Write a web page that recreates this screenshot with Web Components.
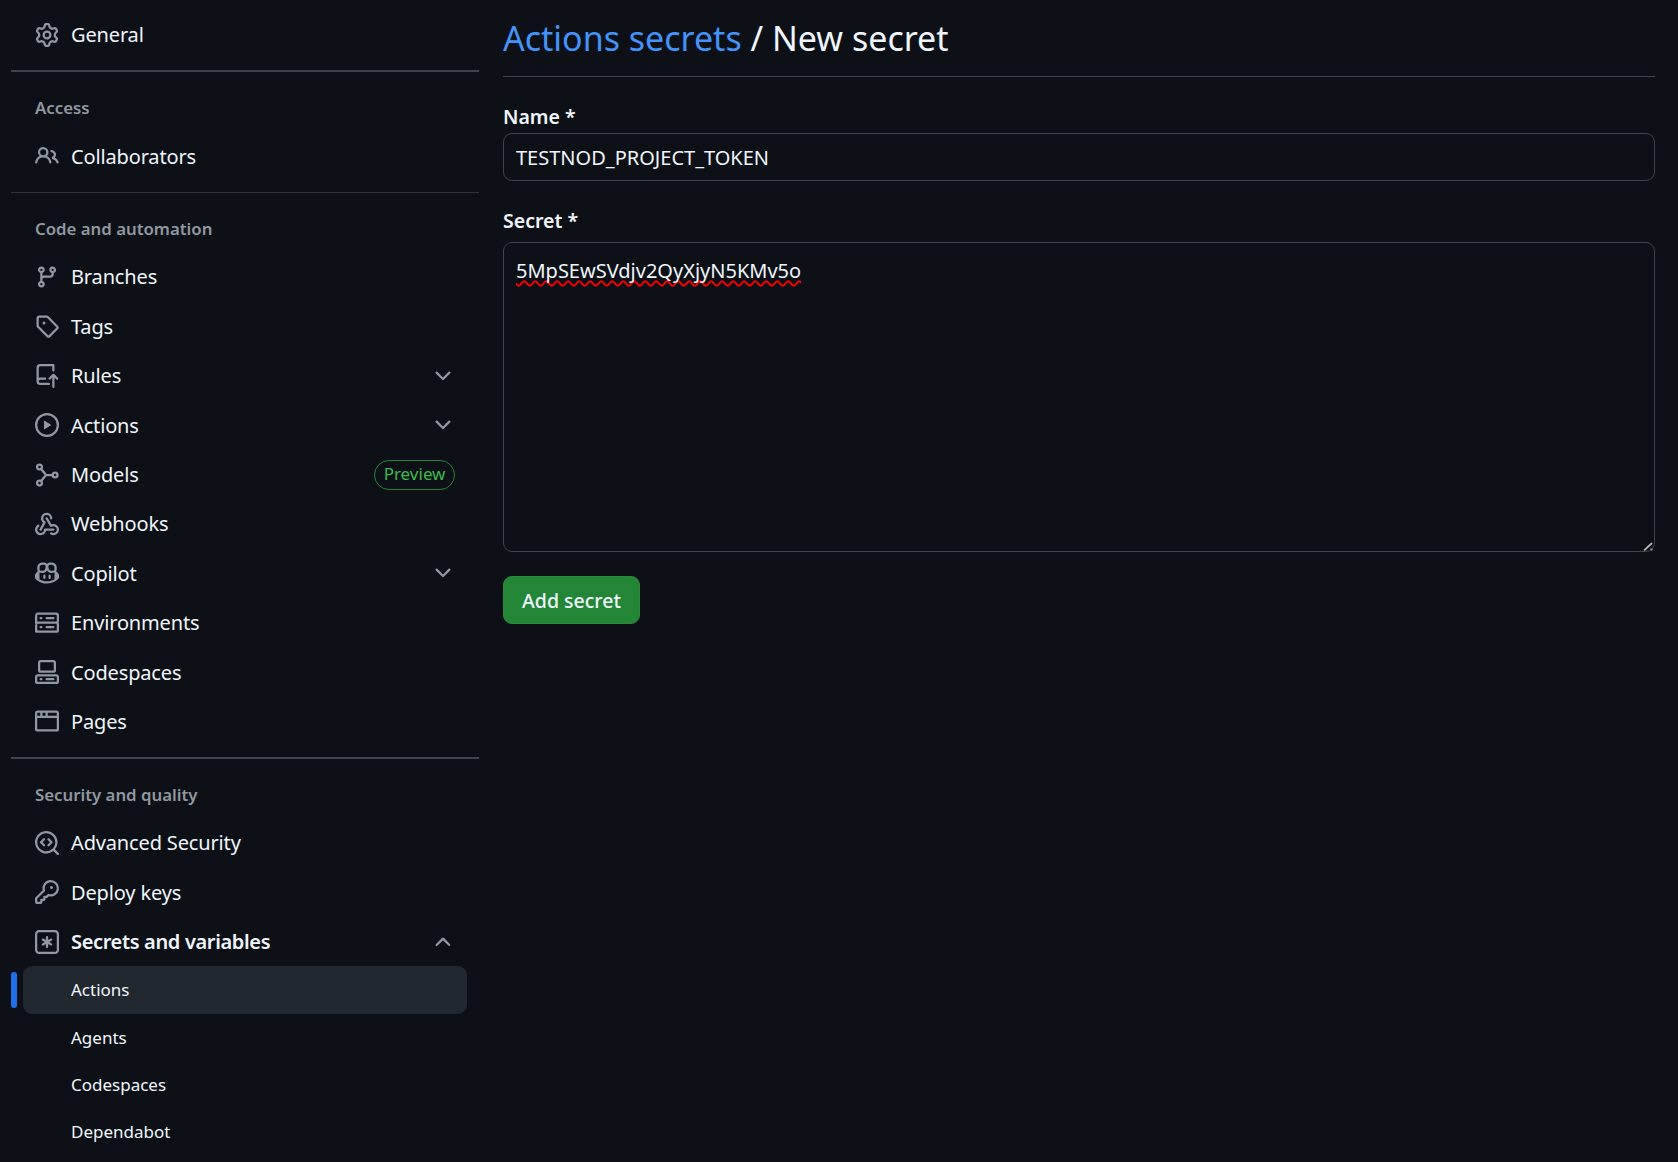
<!DOCTYPE html>
<html lang="en">
<head>
<meta charset="utf-8">
<title>Actions secrets / New secret</title>
<style>
  html, body { margin: 0; height: 100%; background: #0d1117; }
  body {
    color: #f0f6fc;
    display: flex;
    font-family: "Noto Sans", "Open Sans", sans-serif;
    gap: 24px;
    height: 1162px;
    overflow: hidden;
    padding: 0 23px 0 11px;
    box-sizing: border-box;
  }
</style>
</head>
<body>
<settings-nav>
  <nav-item icon="gear">General</nav-item>
  <nav-divider thick></nav-divider>
  <nav-heading>Access</nav-heading>
  <nav-item icon="people">Collaborators</nav-item>
  <nav-divider></nav-divider>
  <nav-heading>Code and automation</nav-heading>
  <nav-item icon="branch">Branches</nav-item>
  <nav-item icon="tag">Tags</nav-item>
  <nav-item icon="rules" chevron="down">Rules</nav-item>
  <nav-item icon="play" chevron="down">Actions</nav-item>
  <nav-item icon="model" badge="Preview">Models</nav-item>
  <nav-item icon="webhook">Webhooks</nav-item>
  <nav-item icon="copilot" chevron="down">Copilot</nav-item>
  <nav-item icon="server">Environments</nav-item>
  <nav-item icon="codespaces">Codespaces</nav-item>
  <nav-item icon="browser">Pages</nav-item>
  <nav-divider thick></nav-divider>
  <nav-heading>Security and quality</nav-heading>
  <nav-item icon="codescan">Advanced Security</nav-item>
  <nav-item icon="key">Deploy keys</nav-item>
  <nav-item icon="asterisk" chevron="up" strong>Secrets and variables</nav-item>
  <nav-subitem current>Actions</nav-subitem>
  <nav-subitem>Agents</nav-subitem>
  <nav-subitem>Codespaces</nav-subitem>
  <nav-subitem>Dependabot</nav-subitem>
</settings-nav>
<secret-form>
  <form-field label="Name *"><text-box>TESTNOD_PROJECT_TOKEN</text-box></form-field>
  <form-field label="Secret *"><text-area-box>5MpSEwSVdjv2QyXjyN5KMv5o</text-area-box></form-field>
  <green-button>Add secret</green-button>
</secret-form>

<script>
const ICONS = {
  gear: "M8 0a8.2 8.2 0 0 1 .701.031C9.444.095 9.99.645 10.16 1.29l.288 1.107c.018.066.079.158.212.224.231.114.454.243.668.386.123.082.233.09.299.071l1.103-.303c.644-.176 1.392.021 1.82.63.27.385.506.792.704 1.218.315.675.111 1.422-.364 1.891l-.814.806c-.049.048-.098.147-.088.294.016.257.016.515 0 .772-.01.147.038.246.088.294l.814.806c.475.469.679 1.216.364 1.891a7.977 7.977 0 0 1-.704 1.217c-.428.61-1.176.807-1.82.63l-1.102-.302c-.067-.019-.177-.011-.3.071a5.909 5.909 0 0 1-.668.386c-.133.066-.194.158-.211.224l-.29 1.106c-.168.646-.715 1.196-1.458 1.26a8.006 8.006 0 0 1-1.402 0c-.743-.064-1.289-.614-1.458-1.26l-.289-1.106c-.018-.066-.079-.158-.212-.224a5.738 5.738 0 0 1-.668-.386c-.123-.082-.233-.09-.299-.071l-1.103.303c-.644.176-1.392-.021-1.82-.63a8.12 8.12 0 0 1-.704-1.218c-.315-.675-.111-1.422.363-1.891l.815-.806c.05-.048.098-.147.088-.294a6.214 6.214 0 0 1 0-.772c.01-.147-.038-.246-.088-.294l-.815-.806C.635 6.045.431 5.298.746 4.623a7.92 7.92 0 0 1 .704-1.217c.428-.61 1.176-.807 1.82-.63l1.102.302c.067.019.177.011.3-.071.214-.143.437-.272.668-.386.133-.066.194-.158.211-.224l.29-1.106C6.009.645 6.556.095 7.299.03 7.53.01 7.764 0 8 0Zm-.571 1.525c-.036.003-.108.036-.137.146l-.289 1.105c-.147.561-.549.967-.998 1.189-.173.086-.34.183-.5.29-.417.278-.97.423-1.529.27l-1.103-.303c-.109-.03-.175.016-.195.045-.22.312-.412.644-.573.99-.014.031-.021.11.059.19l.815.806c.411.406.562.957.53 1.456a4.709 4.709 0 0 0 0 .582c.032.499-.119 1.05-.53 1.456l-.815.806c-.081.08-.073.159-.059.19.162.346.353.677.573.989.02.03.085.076.195.046l1.102-.303c.56-.153 1.113-.008 1.53.27.161.107.328.204.501.29.447.222.85.629.997 1.189l.289 1.105c.029.109.101.143.137.146a6.6 6.6 0 0 0 1.142 0c.036-.003.108-.036.137-.146l.289-1.105c.147-.561.549-.967.998-1.189.173-.086.34-.183.5-.29.417-.278.97-.423 1.529-.27l1.103.303c.109.029.175-.016.195-.045.22-.313.411-.644.573-.99.014-.031.021-.11-.059-.19l-.815-.806c-.411-.406-.562-.957-.53-1.456a4.709 4.709 0 0 0 0-.582c-.032-.499.119-1.05.53-1.456l.815-.806c.081-.08.073-.159.059-.19a6.464 6.464 0 0 0-.573-.989c-.02-.03-.085-.076-.195-.046l-1.102.303c-.56.153-1.113.008-1.53-.27a4.44 4.44 0 0 0-.501-.29c-.447-.222-.85-.629-.997-1.189l-.289-1.105c-.029-.11-.101-.143-.137-.146a6.6 6.6 0 0 0-1.142 0ZM11 8a3 3 0 1 1-6 0 3 3 0 0 1 6 0ZM9.5 8a1.5 1.5 0 1 0-3.001.001A1.5 1.5 0 0 0 9.5 8Z",
  people: "M2 5.5a3.5 3.5 0 1 1 5.898 2.549 5.508 5.508 0 0 1 3.034 4.084.75.75 0 1 1-1.482.235 4 4 0 0 0-7.9 0 .75.75 0 0 1-1.482-.236A5.507 5.507 0 0 1 3.102 8.05 3.493 3.493 0 0 1 2 5.5ZM11 4a3.001 3.001 0 0 1 2.22 5.018 5.01 5.01 0 0 1 2.56 3.012.749.749 0 0 1-.885.954.752.752 0 0 1-.549-.514 3.507 3.507 0 0 0-2.522-2.372.75.75 0 0 1-.574-.73v-.352a.75.75 0 0 1 .416-.672A1.5 1.5 0 0 0 11 5.5.75.75 0 0 1 11 4Zm-5.5-.5a2 2 0 1 0-.001 3.999A2 2 0 0 0 5.5 3.5Z",
  branch: "M9.5 3.25a2.25 2.25 0 1 1 3 2.122V6A2.5 2.5 0 0 1 10 8.5H6a1 1 0 0 0-1 1v1.128a2.251 2.251 0 1 1-1.5 0V5.372a2.25 2.25 0 1 1 1.5 0v1.836A2.493 2.493 0 0 1 6 7h4a1 1 0 0 0 1-1v-.628A2.25 2.25 0 0 1 9.5 3.25Zm-6 0a.75.75 0 1 0 1.5 0 .75.75 0 0 0-1.5 0Zm8.25-.75a.75.75 0 1 0 0 1.5.75.75 0 0 0 0-1.5ZM4.25 12a.75.75 0 1 0 0 1.5.75.75 0 0 0 0-1.5Z",
  tag: "M1 7.775V2.75C1 1.784 1.784 1 2.75 1h5.025c.464 0 .91.184 1.238.513l6.25 6.25a1.75 1.75 0 0 1 0 2.474l-5.026 5.026a1.75 1.75 0 0 1-2.474 0l-6.25-6.25A1.752 1.752 0 0 1 1 7.775Zm1.5 0c0 .066.026.13.073.177l6.25 6.25a.25.25 0 0 0 .354 0l5.025-5.025a.25.25 0 0 0 0-.354l-6.25-6.25a.25.25 0 0 0-.177-.073H2.75a.25.25 0 0 0-.25.25ZM6 5a1 1 0 1 1 0 2 1 1 0 0 1 0-2Z",
  rules: "M1 2.5A2.5 2.5 0 0 1 3.5 0h8.75a.75.75 0 0 1 .75.75v3.5a.75.75 0 0 1-1.5 0V1.5h-8a1 1 0 0 0-1 1v6.708A2.493 2.493 0 0 1 3.5 9h3.25a.75.75 0 0 1 0 1.5H3.5a1 1 0 0 0 0 2h5.75a.75.75 0 0 1 0 1.5H3.5A2.5 2.5 0 0 1 1 11.5Zm13.23 7.79h-.001l-1.224-1.224v6.184a.75.75 0 0 1-1.5 0V9.066L10.28 10.29a.75.75 0 0 1-1.06-1.061l2.505-2.504a.75.75 0 0 1 1.06 0L15.29 9.23a.751.751 0 0 1-.018 1.042.751.751 0 0 1-1.042.018Z",
  play: "M8 0a8 8 0 1 1 0 16A8 8 0 0 1 8 0ZM1.5 8a6.5 6.5 0 1 0 13 0 6.5 6.5 0 0 0-13 0Zm4.879-2.773 4.264 2.559a.25.25 0 0 1 0 .428l-4.264 2.559A.25.25 0 0 1 6 10.559V5.442a.25.25 0 0 1 .379-.215Z",
  webhook: "M5.5 4.25a2.25 2.25 0 0 1 4.5 0 .75.75 0 0 0 1.5 0 3.75 3.75 0 1 0-6.14 2.889l-2.272 4.258a.75.75 0 0 0 1.324.706L7 7.25a.75.75 0 0 0-.309-1.015A2.25 2.25 0 0 1 5.5 4.25ZM7.364 3.607a.75.75 0 0 1 1.03.257l2.608 4.349a3.75 3.75 0 1 1-.628 6.785.75.75 0 0 1 .752-1.299 2.25 2.25 0 1 0-.033-3.88.75.75 0 0 1-1.03-.256L7.107 4.636a.75.75 0 0 1 .257-1.03ZM2.9 8.776A.75.75 0 0 1 2.625 9.8 2.25 2.25 0 1 0 6 11.75a.75.75 0 0 1 .75-.751h5.5a.75.75 0 0 1 0 1.5H7.425a3.751 3.751 0 1 1-5.55-3.998.75.75 0 0 1 1.024.274Z",
  copilot: "M7.998 15.035c-4.562 0-7.873-2.914-7.998-3.749V9.338c.085-.628.677-1.686 1.588-2.065.013-.07.024-.143.036-.218.029-.183.06-.384.126-.612-.201-.508-.254-1.084-.254-1.656 0-.87.128-1.769.693-2.484.579-.733 1.494-1.124 2.724-1.261 1.206-.134 2.262.034 2.944.765.05.053.096.108.139.165.044-.057.094-.112.143-.165.682-.731 1.738-.899 2.944-.765 1.23.137 2.145.528 2.724 1.261.566.715.693 1.614.693 2.484 0 .572-.053 1.148-.254 1.656.066.228.098.429.126.612.012.076.024.148.037.218.924.385 1.522 1.471 1.591 2.095v1.872c0 .766-3.351 3.795-8.002 3.795Zm0-1.485c2.28 0 4.584-1.11 5.002-1.433V7.862l-.023-.116c-.49.21-1.075.291-1.727.291-1.146 0-2.059-.327-2.71-.991A3.222 3.222 0 0 1 8 6.303a3.24 3.24 0 0 1-.544.743c-.65.664-1.563.991-2.71.991-.652 0-1.236-.081-1.727-.291l-.023.116v4.255c.419.323 2.722 1.433 5.002 1.433ZM6.762 2.83c-.193-.206-.637-.413-1.682-.297-1.019.113-1.479.404-1.713.7-.247.312-.369.789-.369 1.554 0 .793.129 1.171.308 1.371.162.181.519.379 1.442.379.853 0 1.339-.235 1.638-.54.315-.322.527-.827.617-1.553.117-.935-.037-1.395-.241-1.614Zm4.155-.297c-1.044-.116-1.488.091-1.681.297-.204.219-.359.679-.242 1.614.091.726.303 1.231.618 1.553.299.305.784.54 1.638.54.922 0 1.28-.198 1.442-.379.179-.2.308-.578.308-1.371 0-.765-.123-1.242-.37-1.554-.233-.296-.693-.587-1.713-.7ZM6.25 9.037a.75.75 0 0 1 .75.75v1.501a.75.75 0 0 1-1.5 0V9.787a.75.75 0 0 1 .75-.75Zm4.25.75v1.501a.75.75 0 0 1-1.5 0V9.787a.75.75 0 0 1 1.5 0Z",
  server: "M1.75 1h12.5c.966 0 1.75.784 1.75 1.75v4c0 .372-.116.717-.314 1 .198.283.314.628.314 1v4a1.75 1.75 0 0 1-1.75 1.75H1.75A1.75 1.75 0 0 1 0 13.75v-4c0-.372.116-.717.314-1a1.739 1.739 0 0 1-.314-1v-4C0 1.784.784 1 1.75 1ZM1.5 2.75v4c0 .138.112.25.25.25h12.5a.25.25 0 0 0 .25-.25v-4a.25.25 0 0 0-.25-.25H1.75a.25.25 0 0 0-.25.25Zm.25 5.75a.25.25 0 0 0-.25.25v4c0 .138.112.25.25.25h12.5a.25.25 0 0 0 .25-.25v-4a.25.25 0 0 0-.25-.25ZM7 4.75A.75.75 0 0 1 7.75 4h4.5a.75.75 0 0 1 0 1.5h-4.5A.75.75 0 0 1 7 4.75ZM7.75 10h4.5a.75.75 0 0 1 0 1.5h-4.5a.75.75 0 0 1 0-1.5ZM3 4.75A.75.75 0 0 1 3.75 4h.5a.75.75 0 0 1 0 1.5h-.5A.75.75 0 0 1 3 4.75ZM3.75 10h.5a.75.75 0 0 1 0 1.5h-.5a.75.75 0 0 1 0-1.5Z",
  codespaces: "M0 11.25c0-.966.784-1.75 1.75-1.75h12.5c.966 0 1.75.784 1.75 1.75v3A1.75 1.75 0 0 1 14.25 16H1.75A1.75 1.75 0 0 1 0 14.25Zm2-9.5C2 .784 2.784 0 3.75 0h8.5C13.216 0 14 .784 14 1.75v5a1.75 1.75 0 0 1-1.75 1.75h-8.5A1.75 1.75 0 0 1 2 6.75Zm1.75-.25a.25.25 0 0 0-.25.25v5c0 .138.112.25.25.25h8.5a.25.25 0 0 0 .25-.25v-5a.25.25 0 0 0-.25-.25Zm-2 9.5a.25.25 0 0 0-.25.25v3c0 .138.112.25.25.25h12.5a.25.25 0 0 0 .25-.25v-3a.25.25 0 0 0-.25-.25ZM7 12.75a.75.75 0 0 1 .75-.75h4.5a.75.75 0 0 1 0 1.5h-4.5a.75.75 0 0 1-.75-.75Zm-4 0a.75.75 0 0 1 .75-.75h.5a.75.75 0 0 1 0 1.5h-.5a.75.75 0 0 1-.75-.75Z",
  browser: "M0 2.75C0 1.784.784 1 1.75 1h12.5c.966 0 1.75.784 1.75 1.75v10.5A1.75 1.75 0 0 1 14.25 15H1.75A1.75 1.75 0 0 1 0 13.25ZM14.5 6h-13v7.25c0 .138.112.25.25.25h12.5a.25.25 0 0 0 .25-.25Zm-6-3.5v2h6V2.75a.25.25 0 0 0-.25-.25ZM5 2.5v2h2v-2Zm-3.25 0a.25.25 0 0 0-.25.25V4.5h2v-2Z",
  codescan: "M8.47 4.97a.75.75 0 0 0 0 1.06L9.94 7.5 8.47 8.97a.75.75 0 1 0 1.06 1.06l2-2a.75.75 0 0 0 0-1.06l-2-2a.75.75 0 0 0-1.06 0ZM6.53 6.03a.75.75 0 0 0-1.06-1.06l-2 2a.75.75 0 0 0 0 1.06l2 2a.75.75 0 1 0 1.06-1.06L5.06 7.5l1.47-1.47ZM12.246 13.307a7.501 7.501 0 1 1 1.06-1.06l2.474 2.473a.749.749 0 0 1-.326 1.275.749.749 0 0 1-.734-.215ZM1.5 7.5a6.002 6.002 0 0 0 3.608 5.504 6.002 6.002 0 0 0 6.486-1.117.748.748 0 0 1 .292-.293A6 6 0 1 0 1.5 7.5Z",
  key: "M10.5 0a5.499 5.499 0 1 1-1.288 10.848l-.932.932a.749.749 0 0 1-.53.22H7v.75a.749.749 0 0 1-.22.53l-.5.5a.749.749 0 0 1-.53.22H5v.75a.749.749 0 0 1-.22.53l-.5.5a.749.749 0 0 1-.53.22h-2A1.75 1.75 0 0 1 0 14.25v-2c0-.199.079-.389.22-.53l4.932-4.932A5.5 5.5 0 0 1 10.5 0Zm-4 5.5c-.001.431.069.86.205 1.269a.75.75 0 0 1-.181.768L1.5 12.56v1.69c0 .138.112.25.25.25h1.69l.06-.06v-1.19a.75.75 0 0 1 .75-.75h1.19l.06-.06v-1.19a.75.75 0 0 1 .75-.75h1.19l1.023-1.025a.75.75 0 0 1 .768-.18A4 4 0 1 0 6.5 5.5ZM11 6a1 1 0 1 1 0-2 1 1 0 0 1 0 2Z",
  asterisk: "M0 2.75A2.75 2.75 0 0 1 2.75 0h10.5A2.75 2.75 0 0 1 16 2.75v10.5A2.75 2.75 0 0 1 13.25 16H2.75A2.75 2.75 0 0 1 0 13.25ZM2.75 1.5c-.69 0-1.25.56-1.25 1.25v10.5c0 .69.56 1.25 1.25 1.25h10.5c.69 0 1.25-.56 1.25-1.25V2.75c0-.69-.56-1.25-1.25-1.25ZM8 4a.75.75 0 0 1 .75.75V6.7l1.69-.975a.75.75 0 0 1 .75 1.3L9.5 8l1.69.976a.75.75 0 0 1-.75 1.298L8.75 9.3v1.951a.75.75 0 0 1-1.5 0V9.299l-1.69.976a.75.75 0 0 1-.75-1.3L6.5 8l-1.69-.975a.75.75 0 0 1 .75-1.3l1.69.976V4.75A.75.75 0 0 1 8 4Z",
  down: "M12.78 5.22a.749.749 0 0 1 0 1.06l-4.25 4.25a.749.749 0 0 1-1.06 0L3.22 6.28a.749.749 0 1 1 1.06-1.06L8 8.939l3.72-3.719a.749.749 0 0 1 1.06 0Z",
  up: "M3.22 10.53a.749.749 0 0 1 0-1.06l4.25-4.25a.749.749 0 0 1 1.06 0l4.25 4.25a.749.749 0 0 1-1.042 1.018.749.749 0 0 1-.018-.018L8 6.811 4.28 10.53a.749.749 0 0 1-1.06 0Z"
};

function svgIcon(name) {
  if (name === "model") {
    // no filled path for this one, three nodes on a hub
    return `<svg viewBox="0 0 16 16" width="24" height="24" fill="none" stroke="currentColor" stroke-width="1.5">
      <circle cx="3" cy="2.6" r="1.6"/><circle cx="3" cy="13.4" r="1.6"/><circle cx="13.4" cy="8" r="1.6"/>
      <path d="M3.9 3.9 7.4 8 3.9 12.1M7.4 8h4.4"/></svg>`;
  }
  return `<svg viewBox="0 0 16 16" width="24" height="24" fill="currentColor"><path d="${ICONS[name]}"/></svg>`;
}

class SettingsNav extends HTMLElement {
  constructor() {
    super();
    this.attachShadow({ mode: "open" }).innerHTML = `
      <style>
        :host { display: block; flex: 0 0 468px; padding-top: 10px; }
      </style>
      <slot></slot>`;
  }
}

class NavItem extends HTMLElement {
  constructor() {
    super();
    const chevron = this.getAttribute("chevron");
    const badge = this.getAttribute("badge");
    this.attachShadow({ mode: "open" }).innerHTML = `
      <style>
        :host {
          align-items: center;
          display: flex;
          font-size: 20px;
          gap: 12px;
          height: 49.4px;
          letter-spacing: -0.15px;
          padding: 0 24px;
        }
        :host([strong]) { font-weight: 600; letter-spacing: -0.35px; }
        .icon, .chevron { color: #9198a1; display: flex; flex: none; }
        .label { flex: 1; white-space: nowrap; }
        .badge {
          border: 1.5px solid #238636;
          border-radius: 15px;
          box-sizing: border-box;
          color: #3fb950;
          font-size: 17px;
          height: 30px;
          letter-spacing: 0;
          line-height: 26px;
          padding: 0 8.5px;
        }
      </style>
      <span class="icon">${svgIcon(this.getAttribute("icon"))}</span>
      <span class="label"><slot></slot></span>
      ${badge ? `<span class="badge">${badge}</span>` : ""}
      ${chevron ? `<span class="chevron">${svgIcon(chevron)}</span>` : ""}`;
  }
}

class NavHeading extends HTMLElement {
  constructor() {
    super();
    this.attachShadow({ mode: "open" }).innerHTML = `
      <style>
        :host {
          color: #9198a1;
          display: block;
          font-size: 16.8px;
          font-weight: 600;
          line-height: 33px;
          margin-bottom: 7px;
          padding: 19.5px 0 0 24px;
        }
      </style>
      <slot></slot>`;
  }
}

class NavDivider extends HTMLElement {
  constructor() {
    super();
    this.attachShadow({ mode: "open" }).innerHTML = `
      <style>
        :host { background: #2f353d; display: block; height: 1px; margin-top: 11px; }
        :host([thick]) { background: #3d444d; height: 1.5px; }
      </style>`;
  }
}

class NavSubitem extends HTMLElement {
  constructor() {
    super();
    this.attachShadow({ mode: "open" }).innerHTML = `
      <style>
        :host { align-items: center; display: flex; font-size: 17px; height: 47.25px; }
        .bar { border-radius: 3px; flex: 0 0 6px; height: 36px; }
        .row {
          align-items: center;
          border-radius: 9px;
          box-sizing: border-box;
          display: flex;
          flex: 0 0 444px;
          height: 48px;
          margin-left: 6px;
          padding-left: 48px;
        }
        :host([current]) .bar { background: #1f6feb; }
        :host([current]) .row { background: #212830; }
      </style>
      <span class="bar"></span>
      <span class="row"><slot></slot></span>`;
  }
}

class SecretForm extends HTMLElement {
  constructor() {
    super();
    this.attachShadow({ mode: "open" }).innerHTML = `
      <style>
        :host { display: block; flex: 1; min-width: 0; }
        h2 {
          border-bottom: 1.5px solid #3d444d;
          font-size: 34px;
          font-weight: 400;
          line-height: 54px;
          margin: 0;
          padding: 11px 0;
        }
        a { color: #4493f8; text-decoration: none; }
      </style>
      <h2><a href="#">Actions secrets</a> / New secret</h2>
      <slot></slot>`;
  }
}

class FormField extends HTMLElement {
  constructor() {
    super();
    this.attachShadow({ mode: "open" }).innerHTML = `
      <style>
        :host { display: block; padding-top: 24px; }
        label { display: block; font-size: 19.5px; font-weight: 600; line-height: 31.5px; }
      </style>
      <label>${this.getAttribute("label")}</label>
      <slot></slot>`;
  }
}

class TextBox extends HTMLElement {
  constructor() {
    super();
    this.attachShadow({ mode: "open" }).innerHTML = `
      <style>
        :host {
          align-items: center;
          border: 1.5px solid #3d444d;
          border-radius: 9px;
          box-sizing: border-box;
          display: flex;
          font-size: 20px;
          height: 48px;
          padding: 1px 12px 0;
        }
      </style>
      <slot></slot>`;
  }
}

class TextAreaBox extends HTMLElement {
  constructor() {
    super();
    this.attachShadow({ mode: "open" }).innerHTML = `
      <style>
        :host {
          border: 1.5px solid #3d444d;
          border-radius: 9px;
          box-sizing: border-box;
          display: block;
          font-size: 20px;
          height: 310px;
          line-height: 31.5px;
          margin-top: 6px;
          padding: 12px;
          position: relative;
        }
        .misspelt {
          text-decoration: underline wavy #ff0000 1.5px;
          text-decoration-skip-ink: none;
          text-underline-offset: 2px;
        }
        svg { bottom: 0; position: absolute; right: 0; }
      </style>
      <span class="misspelt"><slot></slot></span>
      <svg width="14" height="14" viewBox="0 0 14 14" fill="none">
        <path d="M4 13.5 12 6" stroke="#000" stroke-width="4"/>
        <path d="M4 13.5 12 6" stroke="#b4b4b4" stroke-width="1.8"/>
        <rect x="10.5" y="11.5" width="2" height="2" fill="#9a9a9a"/>
      </svg>`;
  }
}

class GreenButton extends HTMLElement {
  constructor() {
    super();
    this.attachShadow({ mode: "open" }).innerHTML = `
      <style>
        :host {
          align-items: center;
          background: #238636;
          border: 1.5px solid #2a8b3e;
          border-radius: 9px;
          box-sizing: border-box;
          cursor: pointer;
          display: inline-flex;
          font-size: 19.5px;
          font-weight: 500;
          height: 48px;
          justify-content: center;
          margin-top: 24px;
          width: 137px;
        }
      </style>
      <slot></slot>`;
  }
}

customElements.define("settings-nav", SettingsNav);
customElements.define("nav-item", NavItem);
customElements.define("nav-heading", NavHeading);
customElements.define("nav-divider", NavDivider);
customElements.define("nav-subitem", NavSubitem);
customElements.define("secret-form", SecretForm);
customElements.define("form-field", FormField);
customElements.define("text-box", TextBox);
customElements.define("text-area-box", TextAreaBox);
customElements.define("green-button", GreenButton);
</script>
</body>
</html>
